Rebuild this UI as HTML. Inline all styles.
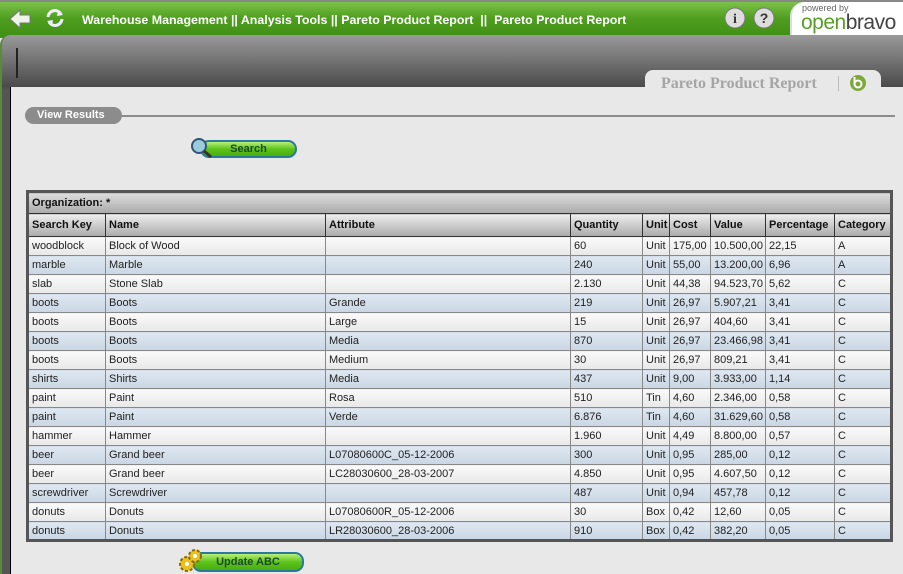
<!DOCTYPE html>
<html><head><meta charset="utf-8"><style>
*{margin:0;padding:0;box-sizing:border-box}
body{width:903px;height:574px;overflow:hidden;background:#e8e8e8;font-family:"Liberation Sans","DejaVu Sans",sans-serif;position:relative}
#top{position:absolute;left:0;top:0;width:903px;height:38px;background:linear-gradient(#7cc24a,#4f9e1f 45%,#3f8f15);border-top:2px solid #888}
#crumb{position:absolute;left:82px;top:11px;color:#fff;font-weight:bold;font-size:12.4px;white-space:pre}
#logo{position:absolute;left:790px;top:0;width:113px;height:36px;background:#fff;border-radius:14px 0 0 0;border-left:2px solid #ddd}
#panel{position:absolute;left:0;top:35px;width:903px;height:539px;background:linear-gradient(#9a9a9a,#4a4a4a 52px,#555 54px);border-radius:10px 0 0 0;border-left:2px solid #5a8a3a}
#content{position:absolute;left:10px;top:87px;width:893px;height:487px;background:#e8e8e8;border-left:1px solid #000}
#tab{position:absolute;left:645px;top:70px;width:236px;height:18px;background:#e8e8e8;border-radius:8px 8px 0 0;}
#tabt{position:absolute;left:661px;top:75px;font-family:"Liberation Serif",serif;font-weight:bold;font-size:16px;color:#a5a5a5;z-index:3}
table{position:absolute;left:26px;top:190px;border-collapse:collapse;border:3px solid #555;font-size:11px;width:867px;table-layout:fixed}
td,th{border:1px solid #888;height:19px;padding:0 3px;text-align:left;white-space:nowrap;overflow:hidden;color:#222}
th{background:linear-gradient(#eee,#aaa);border:1px solid #333;font-weight:bold;height:23px;color:#111}
tr.org th{border:none;height:22px;background:linear-gradient(#ddd,#aaa)}
tr:nth-child(odd) td{background:linear-gradient(#fafafa,#e8e8e8)}
tr:nth-child(even) td{background:linear-gradient(#dfe8f1,#c9d6e3)}
.btn{position:absolute;height:18px;border-radius:9px;background:linear-gradient(#b9f07a,#5cc41c 50%,#4aac10);border:2px solid #2a7a9a;font-weight:bold;font-size:11px;color:#1a4a2a;text-align:center;line-height:14px}
</style></head><body>
<div id="top">
<svg style="position:absolute;left:8px;top:6px" width="24" height="22"><path d="M2 11 L12 2 V7 H22 V15 H12 V20 Z" fill="#eef5e8" stroke="#777" stroke-width="1"/></svg>
<svg style="position:absolute;left:44px;top:5px" width="22" height="22"><path d="M4 10 A7 7 0 0 1 17 7" fill="none" stroke="#eef" stroke-width="3"/><path d="M18 12 A7 7 0 0 1 5 15" fill="none" stroke="#eef" stroke-width="3"/><path d="M14 3 L19 8 L13 9Z M8 19 L3 14 L9 13Z" fill="#eef"/></svg>
<div id="crumb">Warehouse Management || Analysis Tools || Pareto Product Report  ||  Pareto Product Report</div>
<svg style="position:absolute;left:724px;top:5px" width="22" height="22"><circle cx="11" cy="11" r="10" fill="#ddd" stroke="#777"/><text x="11" y="16" text-anchor="middle" font-family="Liberation Serif" font-weight="bold" font-size="14" fill="#333">i</text></svg>
<svg style="position:absolute;left:753px;top:5px" width="22" height="22"><circle cx="11" cy="11" r="10" fill="#ddd" stroke="#777"/><text x="11" y="16" text-anchor="middle" font-family="Liberation Sans" font-weight="bold" font-size="14" fill="#333">?</text></svg>
<div id="logo"><div style="position:absolute;left:10px;top:1px;font-size:9px;color:#666">powered by</div><div style="position:absolute;left:9px;top:9px;font-size:21px;letter-spacing:-0.5px"><span style="color:#5a9e2a">open</span><span style="color:#444">bravo</span></div></div>
</div>
<div id="panel"><div style="position:absolute;left:14px;top:13px;width:2px;height:30px;background:#222"></div></div>
<div id="tab"><div style="position:absolute;left:193px;top:6px;width:1px;height:15px;background:#bbb;z-index:4"></div></div>
<div id="content"></div>
<svg style="position:absolute;left:849px;top:74px;z-index:4" width="18" height="18"><circle cx="9" cy="9" r="8" fill="#7aa83a"/><circle cx="9" cy="10" r="3.5" fill="none" stroke="#fff" stroke-width="2"/><path d="M5.5 3 V10" stroke="#fff" stroke-width="2"/></svg>
<div style="position:absolute;left:838px;top:76px;width:1px;height:15px;background:#bbb;z-index:4"></div>
<div id="tabt">Pareto Product Report</div>
<div style="position:absolute;left:25px;top:107px;width:97px;height:17px;border-radius:9px;background:#8c8c8c;color:#fff;font-weight:bold;font-size:11px;line-height:17px;padding-left:12px">View Results</div>
<div style="position:absolute;left:122px;top:115px;width:773px;height:2px;background:#8c8c8c"></div>
<div class="btn" style="left:200px;top:140px;width:97px">Search</div>
<svg style="position:absolute;left:189px;top:137px" width="26" height="24"><circle cx="10" cy="9" r="7" fill="#9cd" stroke="#357" stroke-width="2"/><path d="M15 14 L22 20" stroke="#333" stroke-width="3"/></svg>
<table>
<colgroup><col style="width:78px"><col style="width:220px"><col style="width:245px"><col style="width:72px"><col style="width:27px"><col style="width:41px"><col style="width:55px"><col style="width:69px"><col></colgroup>
<tr class="org"><th colspan="9">Organization: *</th></tr>
<tr><th>Search Key</th><th>Name</th><th>Attribute</th><th>Quantity</th><th>Unit</th><th>Cost</th><th>Value</th><th>Percentage</th><th>Category</th></tr>
<tr><td>woodblock</td><td>Block of Wood</td><td></td><td>60</td><td>Unit</td><td>175,00</td><td>10.500,00</td><td>22,15</td><td>A</td></tr>
<tr><td>marble</td><td>Marble</td><td></td><td>240</td><td>Unit</td><td>55,00</td><td>13.200,00</td><td>6,96</td><td>A</td></tr>
<tr><td>slab</td><td>Stone Slab</td><td></td><td>2.130</td><td>Unit</td><td>44,38</td><td>94.523,70</td><td>5,62</td><td>C</td></tr>
<tr><td>boots</td><td>Boots</td><td>Grande</td><td>219</td><td>Unit</td><td>26,97</td><td>5.907,21</td><td>3,41</td><td>C</td></tr>
<tr><td>boots</td><td>Boots</td><td>Large</td><td>15</td><td>Unit</td><td>26,97</td><td>404,60</td><td>3,41</td><td>C</td></tr>
<tr><td>boots</td><td>Boots</td><td>Media</td><td>870</td><td>Unit</td><td>26,97</td><td>23.466,98</td><td>3,41</td><td>C</td></tr>
<tr><td>boots</td><td>Boots</td><td>Medium</td><td>30</td><td>Unit</td><td>26,97</td><td>809,21</td><td>3,41</td><td>C</td></tr>
<tr><td>shirts</td><td>Shirts</td><td>Media</td><td>437</td><td>Unit</td><td>9,00</td><td>3.933,00</td><td>1,14</td><td>C</td></tr>
<tr><td>paint</td><td>Paint</td><td>Rosa</td><td>510</td><td>Tin</td><td>4,60</td><td>2.346,00</td><td>0,58</td><td>C</td></tr>
<tr><td>paint</td><td>Paint</td><td>Verde</td><td>6.876</td><td>Tin</td><td>4,60</td><td>31.629,60</td><td>0,58</td><td>C</td></tr>
<tr><td>hammer</td><td>Hammer</td><td></td><td>1.960</td><td>Unit</td><td>4,49</td><td>8.800,00</td><td>0,57</td><td>C</td></tr>
<tr><td>beer</td><td>Grand beer</td><td>L07080600C_05-12-2006</td><td>300</td><td>Unit</td><td>0,95</td><td>285,00</td><td>0,12</td><td>C</td></tr>
<tr><td>beer</td><td>Grand beer</td><td>LC28030600_28-03-2007</td><td>4.850</td><td>Unit</td><td>0,95</td><td>4.607,50</td><td>0,12</td><td>C</td></tr>
<tr><td>screwdriver</td><td>Screwdriver</td><td></td><td>487</td><td>Unit</td><td>0,94</td><td>457,78</td><td>0,12</td><td>C</td></tr>
<tr><td>donuts</td><td>Donuts</td><td>L07080600R_05-12-2006</td><td>30</td><td>Box</td><td>0,42</td><td>12,60</td><td>0,05</td><td>C</td></tr>
<tr><td>donuts</td><td>Donuts</td><td>LR28030600_28-03-2006</td><td>910</td><td>Box</td><td>0,42</td><td>382,20</td><td>0,05</td><td>C</td></tr>
</table>
<div class="btn" style="left:192px;top:552px;width:112px;line-height:16px;height:20px">Update ABC</div>
<svg style="position:absolute;left:178px;top:548px" width="26" height="26"><circle cx="9" cy="16" r="7" fill="#e8c020" stroke="#8a6a00" stroke-dasharray="3 2" stroke-width="2"/><circle cx="17" cy="8" r="6" fill="#e8c020" stroke="#8a6a00" stroke-dasharray="3 2" stroke-width="2"/><circle cx="9" cy="16" r="2" fill="#fff"/><circle cx="17" cy="8" r="2" fill="#fff"/></svg>
</body></html>
